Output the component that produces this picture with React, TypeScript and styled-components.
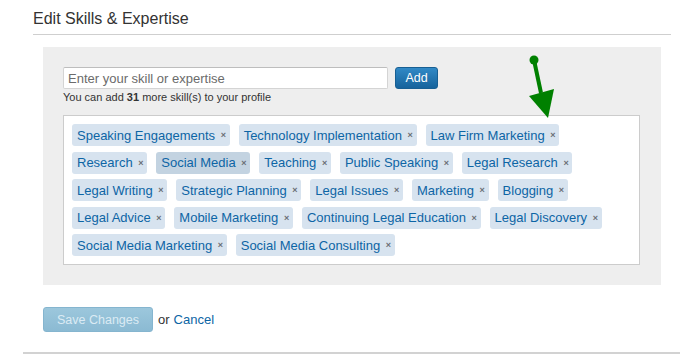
import styled, { createGlobalStyle } from 'styled-components';

const GlobalStyle = createGlobalStyle`
  html, body {
    margin: 0;
    padding: 0;
    background: #fff;
    font-family: "Liberation Sans", Arial, sans-serif;
  }
`;

const Page = styled.div`
  position: relative;
  width: 680px;
  height: 359px;
  overflow: hidden;
`;

const Section = styled.div`
  margin: 0 9px 0 33px;
`;

const Title = styled.h2`
  margin: 0;
  padding: 10px 0 6px;
  font-size: 16px;
  line-height: 18px;
  font-weight: normal;
  color: #333;
  border-bottom: 1px solid #cfcfcf;
`;

const Panel = styled.div`
  margin: 12px 10px 0;
  padding: 20px 21px 20px 20px;
  background: #eeeeee;
`;

const InputRow = styled.div`
  display: flex;
  align-items: flex-start;
  gap: 7px;
`;

const SkillInput = styled.input`
  box-sizing: border-box;
  width: 325px;
  height: 22px;
  margin: 0;
  padding: 0 4px;
  border: 1px solid #d4d4d4;
  border-top-color: #bdbdbd;
  border-radius: 2px;
  background: #fff;
  font-family: inherit;
  font-size: 13px;
  color: #333;
  &::placeholder {
    color: #6b6b6b;
  }
`;

const BlueButton = styled.button<{ $disabled?: boolean }>`
  box-sizing: border-box;
  margin: 0;
  padding: 0 8px;
  border-radius: 3px;
  font-family: inherit;
  font-size: 12.5px;
  cursor: pointer;
  border: 1px solid ${({ $disabled }) => ($disabled ? '#85b5cf' : '#175f93')};
  color: ${({ $disabled }) => ($disabled ? '#dbebf4' : '#fff')};
  background: ${({ $disabled }) =>
    $disabled
      ? 'linear-gradient(#9cc7dc, #8bbad3)'
      : 'linear-gradient(#3189c6, #16639c)'};
`;

const AddButton = styled(BlueButton)`
  width: 43px;
  height: 22px;
`;

const Hint = styled.div`
  margin-top: 2px;
  font-size: 11px;
  line-height: 13px;
  color: #333;
  b {
    font-weight: bold;
  }
`;

const TagBox = styled.div`
  margin-top: 11px;
  padding: 8px;
  border: 1px solid #cccccc;
  background: #fff;
  display: flex;
  flex-wrap: wrap;
  gap: 5.5px 9px;
`;

const Tag = styled.span<{ $active?: boolean }>`
  display: inline-flex;
  align-items: center;
  height: 22px;
  padding: 0 4px 0 5px;
  border-radius: 3px;
  background: ${({ $active }) => ($active ? '#c3d3e1' : '#d7e3ef')};
  color: #0d65a5;
  font-size: 13px;
  line-height: 23px;
  white-space: nowrap;
`;

const Remove = styled.span`
  display: inline-block;
  width: 5px;
  margin-left: 5.6px;
  font-size: 9px;
  font-weight: bold;
  color: #6a6f75;
  line-height: 22px;
  overflow: visible;
`;

const Actions = styled.div`
  display: flex;
  align-items: center;
  margin: 22px 10px 0;
  font-size: 13px;
  color: #333;
`;

const SaveButton = styled(BlueButton)`
  width: 110px;
  height: 25px;
  margin-right: 5px;
`;

const CancelLink = styled.a`
  margin-left: 4px;
  color: #0d65a5;
  text-decoration: none;
`;

const FooterRule = styled.div`
  margin: 20px 0 0 23px;
  border-top: 2px solid #d2d2d2;
`;

const Annotation = styled.svg`
  position: absolute;
  left: 0;
  top: 0;
  pointer-events: none;
`;

const skills: string[] = [
  'Speaking Engagements',
  'Technology Implementation',
  'Law Firm Marketing',
  'Research',
  'Social Media',
  'Teaching',
  'Public Speaking',
  'Legal Research',
  'Legal Writing',
  'Strategic Planning',
  'Legal Issues',
  'Marketing',
  'Blogging',
  'Legal Advice',
  'Mobile Marketing',
  'Continuing Legal Education',
  'Legal Discovery',
  'Social Media Marketing',
  'Social Media Consulting',
];

export default function App() {
  return (
    <Page>
      <GlobalStyle />
      <Section>
        <Title>Edit Skills &amp; Expertise</Title>
        <Panel>
          <InputRow>
            <SkillInput placeholder="Enter your skill or expertise" />
            <AddButton>Add</AddButton>
          </InputRow>
          <Hint>
            You can add <b>31</b> more skill(s) to your profile
          </Hint>
          <TagBox>
            {skills.map((skill) => (
              <Tag key={skill} $active={skill === 'Social Media'}>
                {skill}
                <Remove>×</Remove>
              </Tag>
            ))}
          </TagBox>
        </Panel>
        <Actions>
          <SaveButton $disabled>Save Changes</SaveButton>
          or <CancelLink href="#">Cancel</CancelLink>
        </Actions>
      </Section>
      <FooterRule />
      <Annotation width="680" height="359" viewBox="0 0 680 359">
        <circle cx="534" cy="60" r="4.5" fill="#008000" />
        <line x1="534" y1="60" x2="541" y2="93" stroke="#008000" strokeWidth="4" />
        <polygon points="529,96 554,89 548,118" fill="#008000" />
      </Annotation>
    </Page>
  );
}
